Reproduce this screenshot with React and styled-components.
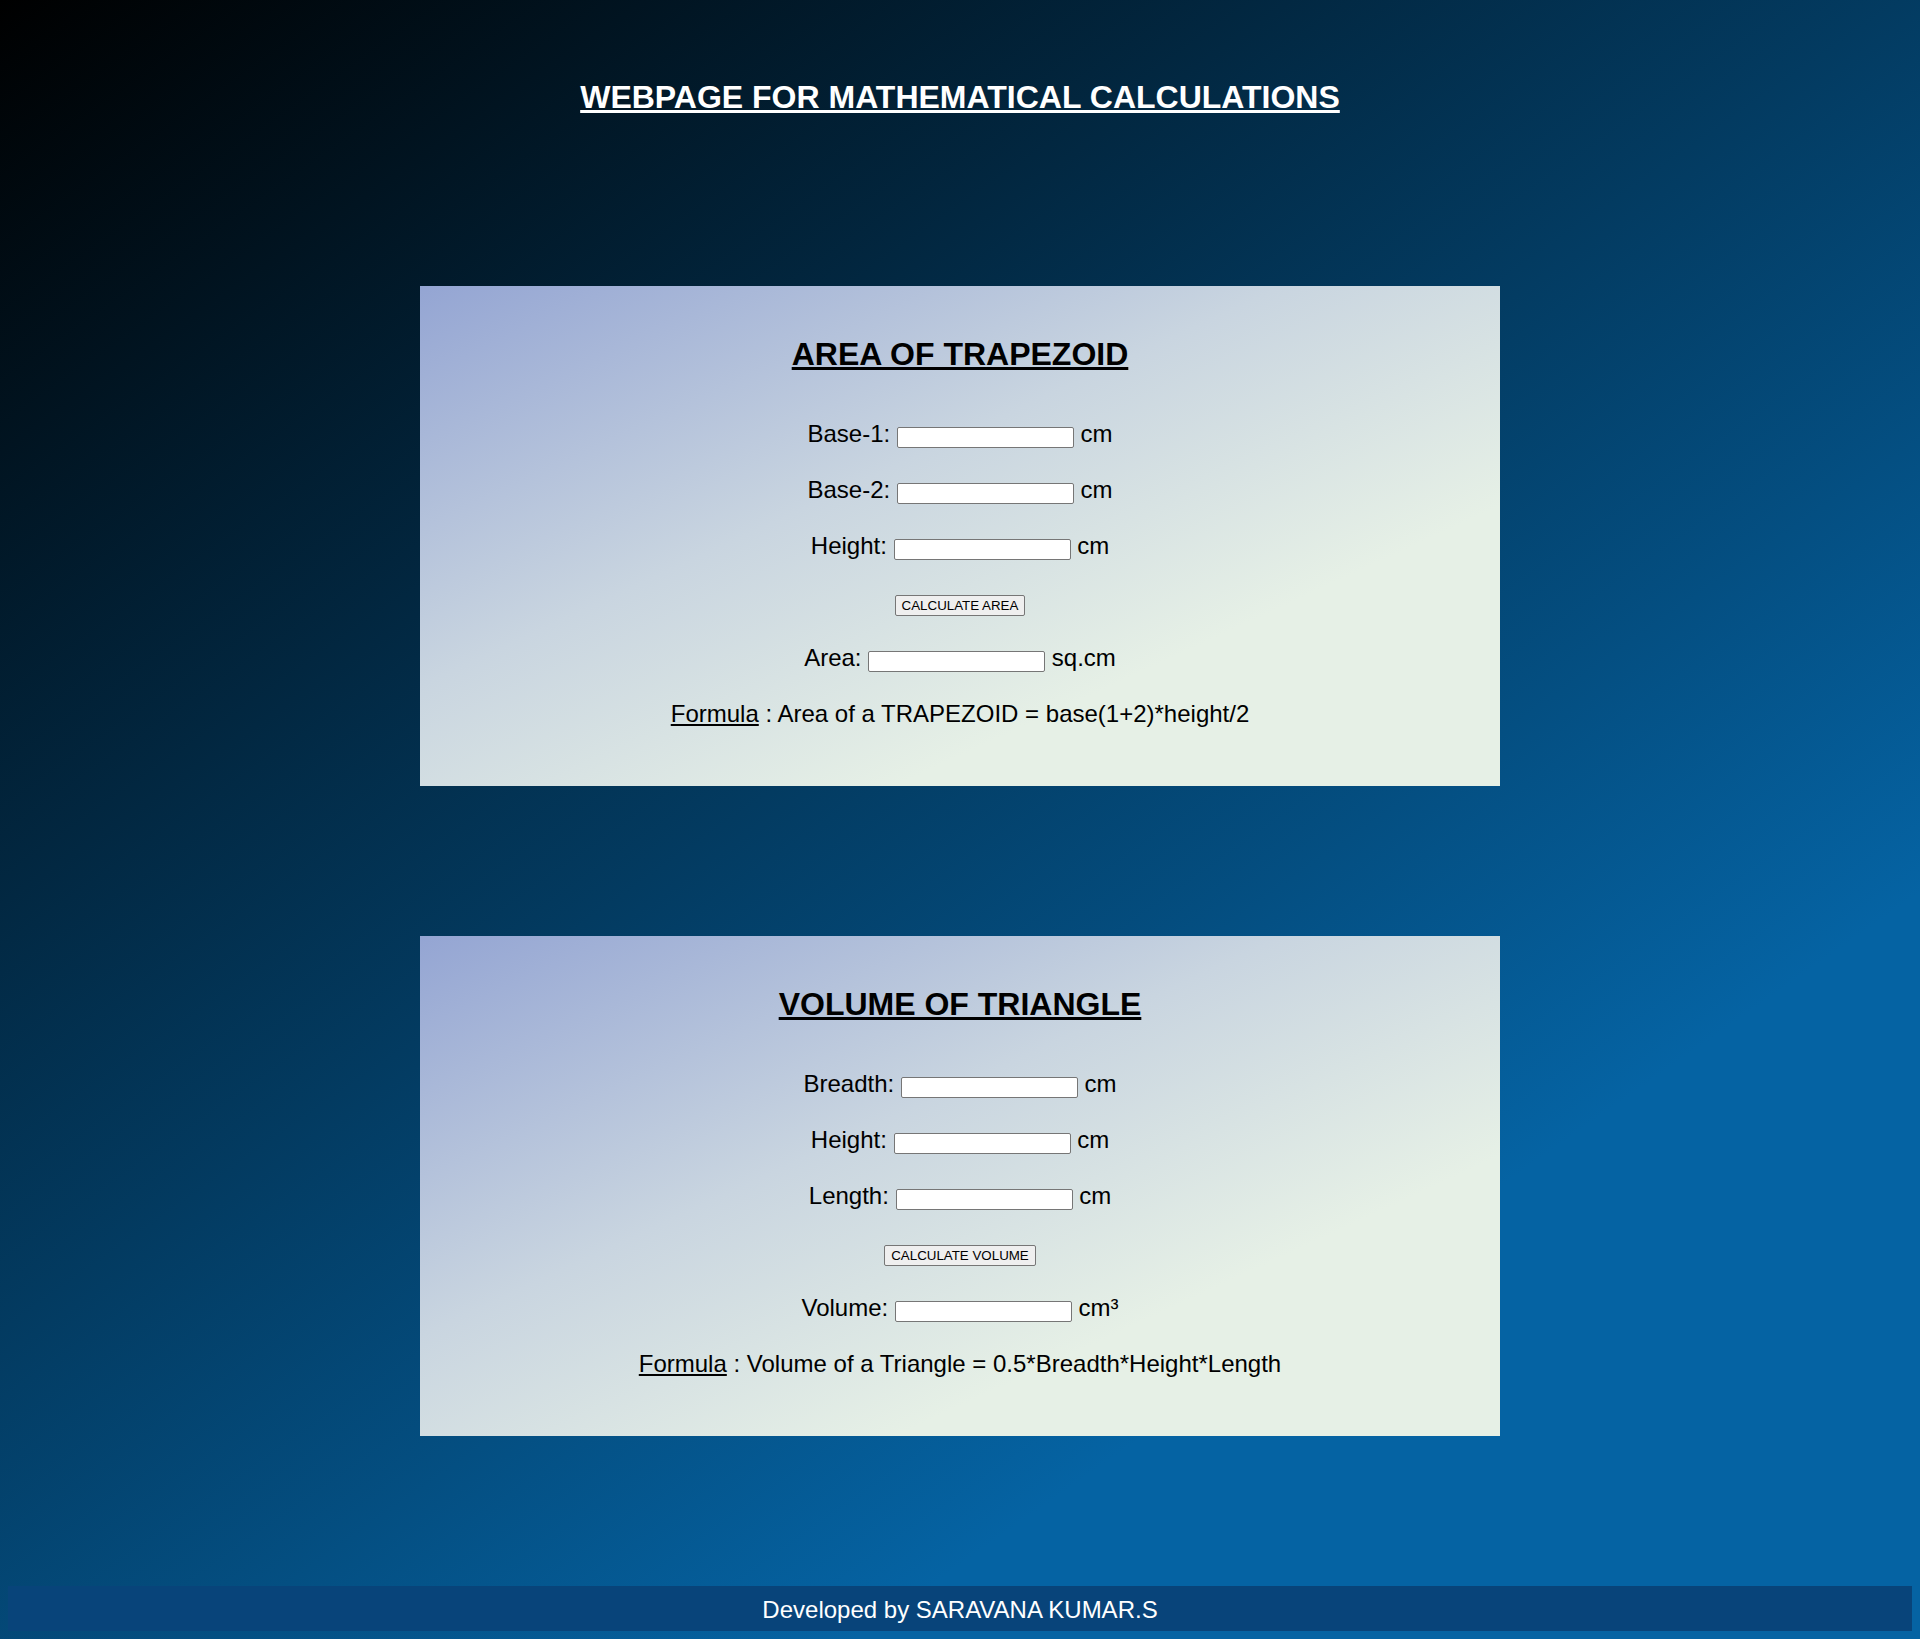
import styled, { createGlobalStyle } from "styled-components";

const GlobalStyle = createGlobalStyle`
  html {
    min-height: 100%;
    background: linear-gradient(145deg, #000000 0%, #0563a3 75%);
  }
  body {
    margin: 8px;
    font-family: "Liberation Sans", Arial, sans-serif;
  }
`;

const calculators = [
  {
    title: "AREA OF TRAPEZOID",
    fields: [
      { label: "Base-1", unit: "cm" },
      { label: "Base-2", unit: "cm" },
      { label: "Height", unit: "cm" },
    ],
    button: "CALCULATE AREA",
    result: { label: "Area", unit: "sq.cm" },
    formula: "Area of a TRAPEZOID = base(1+2)*height/2",
  },
  {
    title: "VOLUME OF TRIANGLE",
    fields: [
      { label: "Breadth", unit: "cm" },
      { label: "Height", unit: "cm" },
      { label: "Length", unit: "cm" },
    ],
    button: "CALCULATE VOLUME",
    result: { label: "Volume", unit: "cm³" },
    formula: "Volume of a Triangle = 0.5*Breadth*Height*Length",
  },
];

const App = () => {
  return (
    <>
      <GlobalStyle />
      <Page>
        <Heading>WEBPAGE FOR MATHEMATICAL CALCULATIONS</Heading>
        {calculators.map((calc) => (
          <Card key={calc.title}>
            <CardTitle>{calc.title}</CardTitle>
            {calc.fields.map((f) => (
              <Row key={f.label}>
                {f.label}: <Field type="text" /> {f.unit}
              </Row>
            ))}
            <Row>
              <CalcButton type="button">{calc.button}</CalcButton>
            </Row>
            <Row>
              {calc.result.label}: <Field type="text" readOnly /> {calc.result.unit}
            </Row>
            <Row>
              <u>Formula</u> : {calc.formula}
            </Row>
          </Card>
        ))}
        <Footer>Developed by SARAVANA KUMAR.S</Footer>
      </Page>
    </>
  );
};

const Page = styled.div`
  display: flex;
  flex-direction: column;
  align-items: center;
  padding-top: 71px;
`;

const Heading = styled.h1`
  margin: 0 0 170px;
  font-size: 32px;
  line-height: 37px;
  font-weight: bold;
  color: #ffffff;
  text-decoration: underline;
`;

const Card = styled.section`
  width: 1080px;
  box-sizing: border-box;
  padding: 50px 0 58px;
  background: linear-gradient(to bottom right, #94a5d3 0%, #c9d5e0 40%, #e6f0e6 72%);
  text-align: center;

  & + & {
    margin-top: 150px;
  }
`;

const CardTitle = styled.h2`
  margin: 0 0 47px;
  font-size: 32px;
  line-height: 37px;
  font-weight: bold;
  color: #000000;
  text-decoration: underline;
`;

const Row = styled.p`
  margin: 0;
  font-size: 24px;
  line-height: 28px;
  color: #000000;

  & + & {
    margin-top: 28px;
  }
`;

const Field = styled.input`
  box-sizing: border-box;
  width: 177px;
  height: 21px;
  margin: 0;
  padding: 1px 2px;
  border: 1px solid #767676;
  border-radius: 2px;
  background: #ffffff;
  font-family: "Liberation Sans", Arial, sans-serif;
  font-size: 13.333px;
  vertical-align: baseline;
`;

const CalcButton = styled.button`
  margin: 0;
  padding: 2px 6px;
  border: 1px solid #767676;
  border-radius: 2px;
  background: #efefef;
  color: #000000;
  font-family: "Liberation Sans", Arial, sans-serif;
  font-size: 13.333px;
  line-height: normal;
  vertical-align: baseline;
`;

const Footer = styled.footer`
  align-self: stretch;
  margin-top: 150px;
  padding: 10px 0 8px;
  background: #08447a;
  color: #ffffff;
  font-size: 24px;
  line-height: 27px;
  text-align: center;
`;

export default App;
